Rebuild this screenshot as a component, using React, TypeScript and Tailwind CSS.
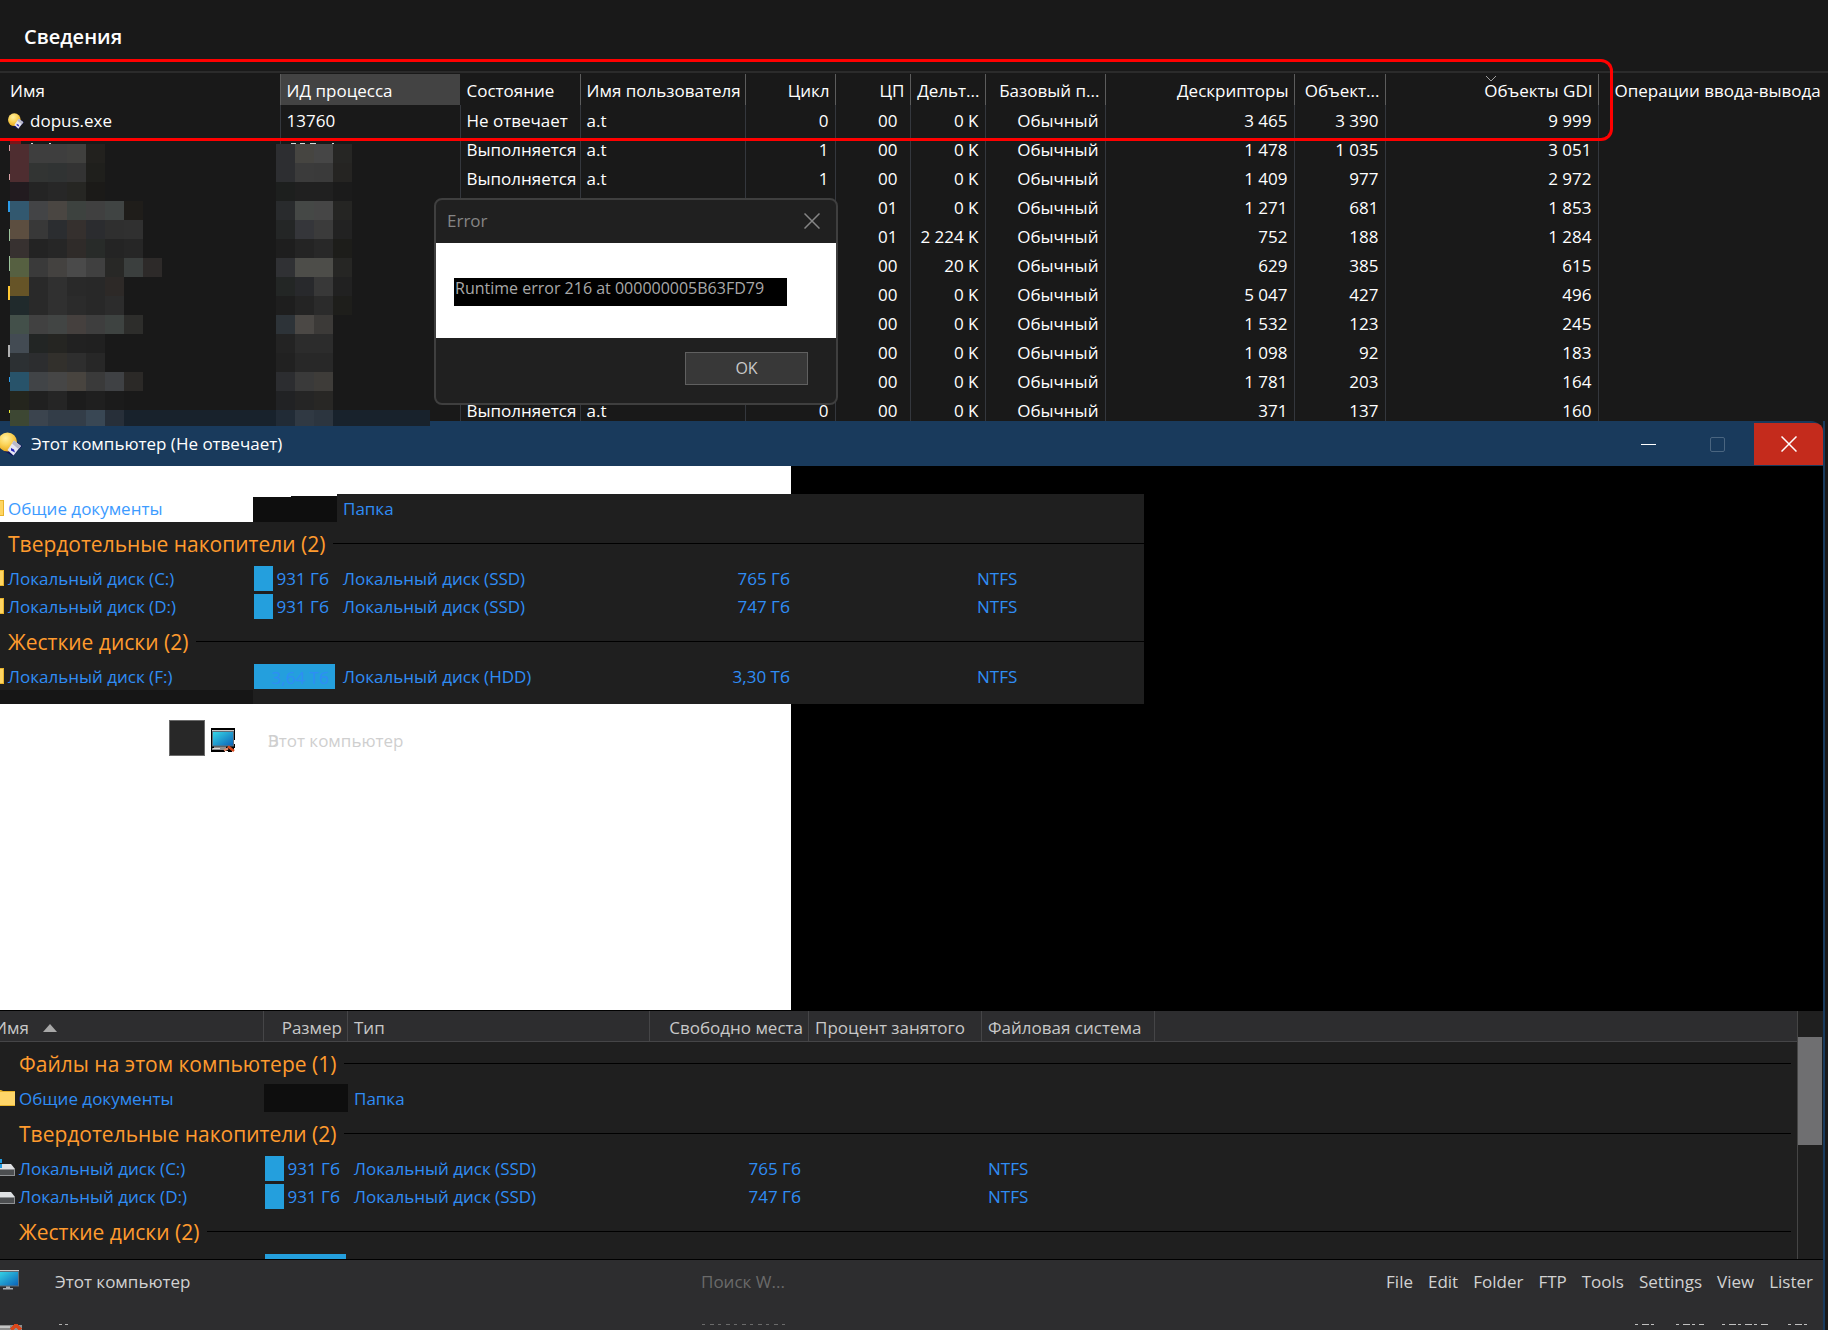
import type { ReactNode } from "react";

// rows without status are covered by the error dialog
const processes = [
  { status: "Не отвечает", owner: "a.t", cycle: "0", cpu: "00", delta: "0 K", handles: "3 465", user: "3 390", gdi: "9 999" },
  { status: "Выполняется", owner: "a.t", cycle: "1", cpu: "00", delta: "0 K", handles: "1 478", user: "1 035", gdi: "3 051" },
  { status: "Выполняется", owner: "a.t", cycle: "1", cpu: "00", delta: "0 K", handles: "1 409", user: "977", gdi: "2 972" },
  { cpu: "01", delta: "0 K", handles: "1 271", user: "681", gdi: "1 853" },
  { cpu: "01", delta: "2 224 K", handles: "752", user: "188", gdi: "1 284" },
  { cpu: "00", delta: "20 K", handles: "629", user: "385", gdi: "615" },
  { cpu: "00", delta: "0 K", handles: "5 047", user: "427", gdi: "496" },
  { cpu: "00", delta: "0 K", handles: "1 532", user: "123", gdi: "245" },
  { cpu: "00", delta: "0 K", handles: "1 098", user: "92", gdi: "183" },
  { cpu: "00", delta: "0 K", handles: "1 781", user: "203", gdi: "164" },
  { status: "Выполняется", owner: "a.t", cycle: "0", cpu: "00", delta: "0 K", handles: "371", user: "137", gdi: "160" },
];

// pixelated name column, one row per 19px band
const nameMosaic = [
  ["#4e2d30", "#3e3e3e", "#3e3e3e", "#40403e", "#22211e"],
  ["#4e2d30", "#323433", "#303333", "#333333", "#1f1f1c"],
  ["#221b1f", "#242424", "#272727", "#262623", "#1b1a18"],
  ["#32586f", "#434446", "#4a4642", "#3d423f", "#404040", "#404443", "#1f1d1a"],
  ["#5c4e40", "#383838", "#2b2d30", "#35302e", "#2b2c2f", "#2f2f2f", "#303030"],
  ["#373130", "#232323", "#262626", "#2f2b29", "#282b29", "#242424", "#262626"],
  ["#566041", "#3a3a3a", "#444240", "#4a4a4a", "#404040", "#282826", "#3b3f3e", "#2d2a29"],
  ["#665427", "#292929", "#303030", "#292929", "#282828", "#2d2927"],
  ["#202a2c", "#292929", "#303030", "#2b2b2b", "#282828", "#2c2c2c"],
  ["#43504a", "#414141", "#424544", "#45403e", "#3e3e3e", "#3e4341", "#2d2d2b"],
  ["#434b53", "#222524", "#252522", "#212121", "#202020"],
  ["#2c3033", "#2c2d2f", "#32302c", "#2e2e2e", "#272727"],
  ["#28536a", "#414447", "#464646", "#48443f", "#3a3a3a", "#3f4144", "#2b2927"],
  ["#24251d", "#202020", "#252525", "#1c1c1c", "#1f1f1f", "#1b1b1b"],
  ["#3d4733", "#3b444e", "#333d48", "#333d48", "#394754", "#272f39"],
];

const pidMosaic = [
  ["#2d2e31", "#464541", "#464646", "#262624"],
  ["#2d2e31", "#3b3b3b", "#3a3a3a", "#252422"],
  ["#1d1f1e", "#202020", "#202020", "#1b1b1b"],
  ["#292b2d", "#454846", "#464646", "#252523"],
  ["#242626", "#35363a", "#3b3b3b", "#222222"],
  ["#1e1e1e", "#242424", "#282828", "#1d1d1a"],
  ["#303134", "#4d4d49", "#4d4d49", "#262624"],
  ["#232625", "#28292c", "#383838", "#212121"],
  ["#1e1e1e", "#242424", "#2b2b2b", "#1e1e1b"],
  ["#2d3338", "#4b4845", "#3c3a38"],
  ["#232323", "#2c2c2c", "#2c2c2c"],
  ["#212121", "#282828", "#282828"],
  ["#2c2d30", "#3a3a3a", "#3e3c39"],
  ["#212224", "#252525", "#282725"],
  ["#212b36", "#303943", "#2c353f"],
];

function Mosaic({ rows, x }: { rows: string[][]; x: number }) {
  return (
    <>
      {rows.map((row, r) =>
        row.map((fill, c) => (
          <rect key={`${r}-${c}`} x={x + c * 19} y={r * 19} width="19" height={r === 14 ? 16 : 19} fill={fill} />
        ))
      )}
    </>
  );
}

function DopusIcon({ className }: { className: string }) {
  return (
    <svg className={className} viewBox="0 0 24 24">
      <defs>
        <radialGradient id="ball" cx="0.4" cy="0.3" r="0.7">
          <stop offset="0" stopColor="#fff0a0" />
          <stop offset="0.5" stopColor="#fbd45a" />
          <stop offset="1" stopColor="#e9a91c" />
        </radialGradient>
      </defs>
      <path d="M15 7l9 7-9 10-9-5z" fill="#0c1160" />
      <circle cx="9.500" cy="10" r="9.500" fill="url(#ball)" />
      <path d="M16 8.500l7 5.500-7.500 9.500-6-5.500z" fill="#e6e6f2" />
      <path d="M16 8.500l7 5.500-2.500 3-6.500-5.500z" fill="#b9b9c9" />
      <path d="M13 16l3 1.500 1 3-4-2z" fill="#2525b8" />
    </svg>
  );
}

function MonitorIcon({ className, broken = false }: { className: string; broken?: boolean }) {
  return (
    <svg className={className} viewBox="0 0 24 24">
      <defs>
        <linearGradient id="screen" x1="0" y1="0" x2="1" y2="1">
          <stop offset="0" stopColor="#35d6e6" />
          <stop offset="1" stopColor="#0b62b8" />
        </linearGradient>
      </defs>
      {broken && <path d="M0 0h24v12h-1v4h1v4h-1v3h-2v1h-4v-1h-3v1H0z" fill="#000" />}
      <path d="M1 2h22v16.500H1z" fill="#5f6d78" />
      <path d="M1 2h22v1H1z" fill="#c9c9c9" />
      <path d="M2 4h20v13.500H2z" fill="url(#screen)" />
      {!broken && <path d="M10 18.500h4v1.500h3v1.500H7V20h3z" fill="#a7adb2" />}
      {broken && <path d="M3 18.500h12v1.500h2v2H1v-2h2z" fill="#8d8d8d" />}
      {broken && <path d="M2 20h7v1H2z" fill="#d8d8d8" />}
      {broken && <path d="M17 18.500l6 4.500" stroke="#d9481c" strokeWidth="2.500" />}
      {broken && <path d="M17 20.500l-4 2" stroke="#e08a6a" strokeWidth="2" />}
    </svg>
  );
}

function FolderIcon() {
  return (
    <svg className="h-4 w-[15px]" viewBox="0 0 15 16">
      <path d="M0 0h1l2 1h12v15H0z" fill="#e8b32c" />
      <path d="M0 2h15v13H0z" fill="#ffd669" />
    </svg>
  );
}

function DriveIcon({ system }: { system?: boolean }) {
  return (
    <svg className="h-[18px] w-[15px]" viewBox="0 0 15 18">
      <path d="M0 5h11l4 5H0z" fill="#dfe1e3" />
      <path d="M0 10h15v7H0z" fill="#8f9193" />
      <path d="M0 11h14v5H0z" fill="#4c4e50" />
      {system && <path d="M0 0h2v4H0zM0 5h2v4H0z" fill="#1f9ae0" />}
    </svg>
  );
}

function SliverIcon() {
  return (
    <svg className="h-4 w-1" viewBox="0 0 4 16">
      <path d="M0 0h4v16H0z" fill="#e8b32c" />
      <path d="M0 1h3v14H0z" fill="#ffd561" />
    </svg>
  );
}

const wideCols = "grid grid-cols-[264px_84px_302px_159px_173px_1fr]";
const staleCols = "grid grid-cols-[253px_84px_302px_159px_173px_1fr]";

function GroupTitle({ children, stale }: { children: ReactNode; stale?: boolean }) {
  return (
    <h2 className={`flex h-[42px] items-center gap-2 text-[21px] leading-6 text-[#ff9b2e] ${stale ? "pl-2" : "pl-[19px] pr-1.5"}`}>
      <span className="shrink-0 pt-0.5">{children}</span>
      <span className="h-px flex-1 bg-black" />
    </h2>
  );
}

interface DriveRowProps {
  icon: ReactNode;
  name: string;
  size?: string;
  full?: boolean;
  type: string;
  free?: string;
  fs?: string;
  stale?: boolean;
}

function DriveRow({ icon, name, size, full, type, free, fs, stale }: DriveRowProps) {
  return (
    <div className={`h-7 items-center text-[17px] leading-6 text-[#2f8df5] ${stale ? staleCols : wideCols}`}>
      <div className="flex items-center gap-1">
        {icon}
        <a href="#" className="pt-0.5">{name}</a>
      </div>
      {size ? (
        <div className="flex h-[25px] items-center pl-px">
          {full ? (
            <span className="h-full w-[81px] bg-[#249fdd] pr-1.5 pt-0.5 text-right">{size}</span>
          ) : (
            <>
              <span className="h-full w-[19px] bg-[#249fdd]" />
              <span className="flex-1 pr-2 pt-0.5 text-right">{size}</span>
            </>
          )}
        </div>
      ) : (
        <div className="h-7 bg-[#0e0e0e]" />
      )}
      <div className="pl-1.5 pt-0.5">{type}</div>
      <div className="pr-2 pt-0.5 text-right">{free}</div>
      <div />
      <div className="pl-1.5 pt-0.5">{fs}</div>
    </div>
  );
}

function TaskManager() {
  return (
    <section className="relative h-[421px] overflow-hidden bg-[#191919] text-white">
      <h1 className="flex h-[71px] items-center pl-6 pt-0.5 text-xl font-semibold">Сведения</h1>
      <div className="h-[3px] border-t-2 border-[#2b2b2b]" />
      <table className="w-full table-fixed border-collapse whitespace-nowrap text-[17px] leading-6">
        <colgroup>
          <col className="w-[280px]" />
          <col className="w-[180px]" />
          <col className="w-[120px]" />
          <col className="w-[165px]" />
          <col className="w-[90px]" />
          <col className="w-[75px]" />
          <col className="w-[75px]" />
          <col className="w-[120px]" />
          <col className="w-[189px]" />
          <col className="w-[91px]" />
          <col className="w-[213px]" />
          <col />
        </colgroup>
        <thead>
          <tr className="h-[31px] *:border-l *:border-[#5c5c5c] *:pb-0 *:pl-1.5 *:pr-[5px] *:pt-0.5 *:font-normal">
            <th className="border-l-0! pl-2.5! text-left">Имя</th>
            <th className="bg-[#434343] text-left">ИД процесса</th>
            <th className="border-transparent! text-left">Состояние</th>
            <th className="text-left">Имя пользователя</th>
            <th className="text-right">Цикл</th>
            <th className="text-right">ЦП</th>
            <th className="text-right">Дельт...</th>
            <th className="text-right">Базовый п...</th>
            <th className="text-right">Дескрипторы</th>
            <th className="text-right">Объект...</th>
            <th className="relative text-right">
              <svg className="absolute left-[99px] top-0.5 h-1.5 w-3" viewBox="0 0 12 6" fill="none" stroke="#a0a0a0">
                <path d="M1 0l5 5 5-5" />
              </svg>
              Объекты GDI
            </th>
            <th className="pl-4! text-left">Операции ввода-вывода</th>
          </tr>
        </thead>
        <tbody>
          {processes.map((p, i) => (
            <tr key={i} className="h-[29px] *:border-r *:border-[#34373d] *:pb-0 *:pl-1.5 *:pr-1.5 *:pt-0.5">
              <td className="pl-2!">
                {i === 0 && (
                  <span className="flex items-center gap-1.5">
                    <DopusIcon className="h-4 w-4" />
                    dopus.exe
                  </span>
                )}
              </td>
              <td>{i === 0 && "13760"}</td>
              <td>{p.status}</td>
              <td>{p.owner}</td>
              <td className="text-right">{p.cycle}</td>
              <td className="pr-3! text-right">{p.cpu}</td>
              <td className="text-right">{p.delta}</td>
              <td className="text-right">Обычный</td>
              <td className="text-right">{p.handles}</td>
              <td className="text-right">{p.user}</td>
              <td className="text-right">{p.gdi}</td>
              <td className="border-r-0!" />
            </tr>
          ))}
        </tbody>
      </table>
      {/* highlight around the hung process */}
      <div className="absolute left-0 top-[59px] h-[82px] w-[1613px] rounded-r-xl border-3 border-l-0 border-[#ff0000]" />
    </section>
  );
}

function Redaction() {
  return (
    <svg className="absolute left-0 top-[141px] h-[285px] w-[430px]" viewBox="0 -3 430 285" shapeRendering="crispEdges">
      <rect x="8" y="0" width="422" height="277" fill="#191919" />
      <rect x="10" y="266" width="420" height="16" fill="#18222c" />
      <path d="M10 -3h11v3h-11z" fill="#7d1418" />
      <path d="M31 -1h2v1h-2zM49 -1h2v1h-2zM291 -1h5v1h-5zM300 -1h5v1h-5zM310 -1h6v1h-6zM332 -1h2v1h-2z" fill="#d8d8d8" />
      <path d="M9 1h1v6h-1zM9 30h1v6h-1z" fill="#d8a0a4" />
      <path d="M8 57h2v11h-2z" fill="#2b9be8" />
      <path d="M9 85h1v12h-1zM9 112h1v15h-1z" fill="#9cc49c" />
      <path d="M8 142h2v14h-2z" fill="#ffc833" />
      <path d="M8 201h2v12h-2z" fill="#b0b0b0" />
      <path d="M9 233h1v5h-1z" fill="#2b9be8" />
      <path d="M9 266h1v3h-1z" fill="#e8e833" />
      <Mosaic rows={nameMosaic} x={10} />
      <Mosaic rows={pidMosaic} x={276} />
    </svg>
  );
}

function ErrorDialog() {
  return (
    <div
      role="dialog"
      aria-label="Error"
      className="absolute left-[434px] top-[198px] w-[404px] overflow-hidden rounded-lg border-2 border-[#3f3f3f] bg-[#202020]"
    >
      <div className="flex h-[43px] items-center justify-between pb-0.5 pl-[11px] pr-4 text-[17px] text-[#858585]">
        <span>Error</span>
        <button type="button" aria-label="Закрыть">
          <svg className="h-4 w-4" viewBox="0 0 16 16" stroke="currentColor" strokeWidth="1.500">
            <path d="M0.500 0.500l15 15M15.500 0.500l-15 15" />
          </svg>
        </button>
      </div>
      <div className="h-[95px] bg-white px-[18px] pt-[35px]">
        <p className="h-7 w-[333px] whitespace-nowrap bg-black pl-px text-base leading-5 text-[#a8a8a8]">
          Runtime error 216 at 000000005B63FD79
        </p>
      </div>
      <div className="flex h-[65px] items-start justify-end pr-7 pt-3.5">
        <button type="button" className="h-[33px] w-[123px] border border-[#606060] bg-[#383838] pb-0.5 text-base text-[#c8c8c8]">
          OK
        </button>
      </div>
    </div>
  );
}

function TitleBar() {
  return (
    <header className="flex h-[45px] items-stretch rounded-tr-xl bg-[#193a5c] pt-0.5 text-white">
      <div className="flex flex-1 items-center gap-2 pb-0.5 text-[17px]">
        <div className="w-[23px] overflow-hidden">
          <DopusIcon className="-ml-0.5 h-6 w-6" />
        </div>
        Этот компьютер (Не отвечает)
      </div>
      <button type="button" aria-label="Свернуть" className="flex w-[69px] items-center justify-center">
        <span className="h-px w-[15px] bg-white" />
      </button>
      <button type="button" aria-label="Развернуть" disabled className="mr-0.5 flex w-[69px] items-center justify-center">
        <span className="h-[15px] w-[15px] rounded-xs border border-[#4a6580]" />
      </button>
      <button type="button" aria-label="Закрыть" className="mb-px flex w-[69px] items-center justify-center rounded-tr-lg bg-[#c42b1c]">
        <svg className="h-4 w-4" viewBox="0 0 16 16" stroke="currentColor" strokeWidth="1.500">
          <path d="M0.500 0.500l15 15M15.500 0.500l-15 15" />
        </svg>
      </button>
    </header>
  );
}

// leftovers of earlier frames that the frozen window never repainted
function StaleArea() {
  return (
    <div className="relative flex h-[544px] bg-black">
      <div className="w-[791px] bg-white" />
      <div className="absolute left-0 top-7 w-[1144px]">
        <div className="flex h-7 text-[17px] leading-6">
          <div className="flex w-[253px] items-center gap-1 bg-white text-[#3d9bff]">
            <SliverIcon />
            <a href="#" className="pt-0.5">Общие документы</a>
          </div>
          <div className="mt-[3px] w-[38px] bg-[#0e0e0e]" />
          <div className="mt-0.5 w-[46px] bg-[#0e0e0e]" />
          <div className="flex flex-1 items-center bg-[#1f1f1f] pl-1.5 pt-0.5 text-[#2f8df5]">Папка</div>
        </div>
        <div className="bg-[#1f1f1f]">
          <GroupTitle stale>Твердотельные накопители (2)</GroupTitle>
          <DriveRow stale icon={<SliverIcon />} name="Локальный диск (C:)" size="931 Гб" type="Локальный диск (SSD)" free="765 Гб" fs="NTFS" />
          <DriveRow stale icon={<SliverIcon />} name="Локальный диск (D:)" size="931 Гб" type="Локальный диск (SSD)" free="747 Гб" fs="NTFS" />
          <GroupTitle stale>Жесткие диски (2)</GroupTitle>
          <DriveRow stale icon={<SliverIcon />} name="Локальный диск (F:)" size="3,64 Тб" full type="Локальный диск (HDD)" free="3,30 Тб" fs="NTFS" />
          <div className="h-3.5">
            <div className="h-full w-[253px] bg-[#161616]" />
          </div>
        </div>
        <div className="flex items-center pl-[169px] pt-4 text-[17px] text-[#cfcfcf]">
          <div className="h-9 w-9 border border-[#6a6a6a] bg-[#282828]" />
          <MonitorIcon broken className="ml-1.5 mt-1 h-6 w-6" />
          <span className="relative ml-[33px] mt-1.5">
            Этот компьютер
            <span className="absolute left-0 top-0">В</span>
          </span>
        </div>
      </div>
    </div>
  );
}

function FileList() {
  return (
    <div className="flex h-[249px] border-t border-black bg-[#1f1f1f]">
      <div className="flex-1 overflow-hidden border-r border-[#454545]">
        <div className={`h-[31px] overflow-hidden border-b border-[#454547] bg-[#2d2d2f] text-[17px] leading-[34px] text-[#c8c8c8] *:border-r *:border-[#454547] ${wideCols}`}>
          <div className="flex items-center gap-3.5">
            <span className="-ml-1.5">Имя</span>
            <svg className="h-2 w-3.5" viewBox="0 0 14 8">
              <path d="M7 0l7 8H0z" fill="#a8a8a8" />
            </svg>
          </div>
          <div className="pr-[5px] text-right">Размер</div>
          <div className="pl-1.5">Тип</div>
          <div className="pr-[5px] text-right">Свободно места</div>
          <div className="pl-1.5">Процент занятого</div>
          <div className="w-[173px] pl-1.5">Файловая система</div>
        </div>
        <GroupTitle>Файлы на этом компьютере (1)</GroupTitle>
        <DriveRow icon={<FolderIcon />} name="Общие документы" type="Папка" />
        <GroupTitle>Твердотельные накопители (2)</GroupTitle>
        <DriveRow icon={<DriveIcon system />} name="Локальный диск (C:)" size="931 Гб" type="Локальный диск (SSD)" free="765 Гб" fs="NTFS" />
        <DriveRow icon={<DriveIcon />} name="Локальный диск (D:)" size="931 Гб" type="Локальный диск (SSD)" free="747 Гб" fs="NTFS" />
        <GroupTitle>Жесткие диски (2)</GroupTitle>
        <div className="h-7 pl-[265px] pt-0.5">
          <div className="h-[25px] w-[81px] bg-[#249fdd]" />
        </div>
      </div>
      <div className="w-[25px] pt-[26px]">
        <div className="h-[108px] w-6 bg-[#6f6f71]" />
      </div>
    </div>
  );
}

const menu = ["File", "Edit", "Folder", "FTP", "Tools", "Settings", "View", "Lister"];

function BottomBar() {
  return (
    <footer className="h-[71px] overflow-hidden border-t border-black bg-[#2d2d2f] text-[17px] text-[#d2d2d2]">
      <div className="flex h-11 items-center">
        <div className="w-[21px] overflow-hidden pb-1">
          <MonitorIcon className="-ml-1 h-6 w-6" />
        </div>
        <span className="ml-[34px] w-[646px]">Этот компьютер</span>
        <span className="text-[#6a6a6a]">Поиск W...</span>
        <nav className="ml-auto flex gap-[15px] pr-2.5">
          {menu.map((item) => (
            <button key={item} type="button">{item}</button>
          ))}
        </nav>
      </div>
      {/* top edge of the next toolbar copy */}
      <svg className="mt-5 h-1.5 w-full" shapeRendering="crispEdges">
        <path d="M0 1h22v5H0z" fill="#8d8d8d" />
        <path d="M0 2h10v2H0z" fill="#c4c4c4" />
        <path d="M11 6l5-5 5 5" fill="none" stroke="#d9481c" strokeWidth="3" />
        <path d="M59 0h3v1h-3zM65 0h3v1h-3z" fill="#b0b0b0" />
        <path d="M702 0.500h84" stroke="#6a6a6a" strokeDasharray="3 5 4 4" />
        <path d="M1635 0.500h22M1676 0.500h28M1722 0.500h48M1788 0.500h22" stroke="#c0c0c0" strokeDasharray="3 4 7 2" />
      </svg>
    </footer>
  );
}

export default function App() {
  return (
    <div className="relative min-w-[1700px] overflow-hidden bg-[#191919] font-['Open_Sans','Noto_Sans',sans-serif]">
      <TaskManager />
      <main className="mr-[3px] border-r-2 border-[#193a5c]">
        <TitleBar />
        <StaleArea />
        <FileList />
        <BottomBar />
      </main>
      <Redaction />
      <ErrorDialog />
    </div>
  );
}
